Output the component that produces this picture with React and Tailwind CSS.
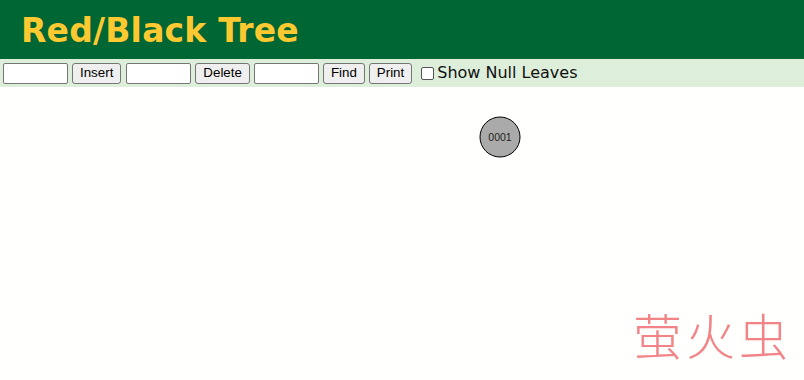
import React from "react";

export default function App() {
  const inputCls =
    "w-[65px] h-[21px] border border-[#767676] rounded-[2px] bg-white px-1 text-[13px]";
  const btnCls =
    "h-[21px] px-[7px] border border-[#767676] rounded-[3px] bg-[#efefef] text-[13.33px] leading-none text-black font-['Liberation_Sans',Arial,sans-serif]";
  return (
    <div className="w-[804px] h-[380px] bg-[#fffffd] flex flex-col overflow-hidden relative">
      <div className="h-[59px] bg-[#006633] flex items-center pl-[21px]">
        <h1 className="text-[#fdc931] font-bold text-[33px] leading-none font-['DejaVu_Sans',Verdana,sans-serif] tracking-[0.2px] mt-[2px]">
          Red/Black Tree
        </h1>
      </div>
      <div className="h-[28px] bg-[#ddeedb] flex items-center pl-[3px] gap-[4px] font-['Liberation_Sans',Arial,sans-serif]">
        <input className={inputCls} />
        <button className={btnCls}>Insert</button>
        <input className={inputCls + " ml-[1px]"} />
        <button className={btnCls}>Delete</button>
        <input className={inputCls} />
        <button className={btnCls}>Find</button>
        <button className={btnCls}>Print</button>
        <label className="flex items-center ml-[5px] text-[16px] text-[#111] font-['DejaVu_Sans',Verdana,sans-serif]">
          <input type="checkbox" className="w-[13px] h-[13px] mr-[3px] appearance-none border border-[#555] rounded-[2px] bg-white" />
          Show Null Leaves
        </label>
      </div>
      <div className="flex-1 relative">
        <svg className="absolute left-0 top-0" width="804" height="293">
          <circle cx="500" cy="50" r="20" fill="#aaaaaa" stroke="#000" strokeWidth="1" />
          <text x="500" y="53.5" textAnchor="middle" fontSize="10.5" fontFamily="Liberation Sans, Arial, sans-serif" fill="#222">
            0001
          </text>
        </svg>
        <div className="absolute left-[633px] top-[222px] text-[49px] leading-none text-[#f28488] font-['Noto_Sans_CJK_SC',sans-serif] font-light tracking-[4px]">
          萤火虫
        </div>
      </div>
    </div>
  );
}
